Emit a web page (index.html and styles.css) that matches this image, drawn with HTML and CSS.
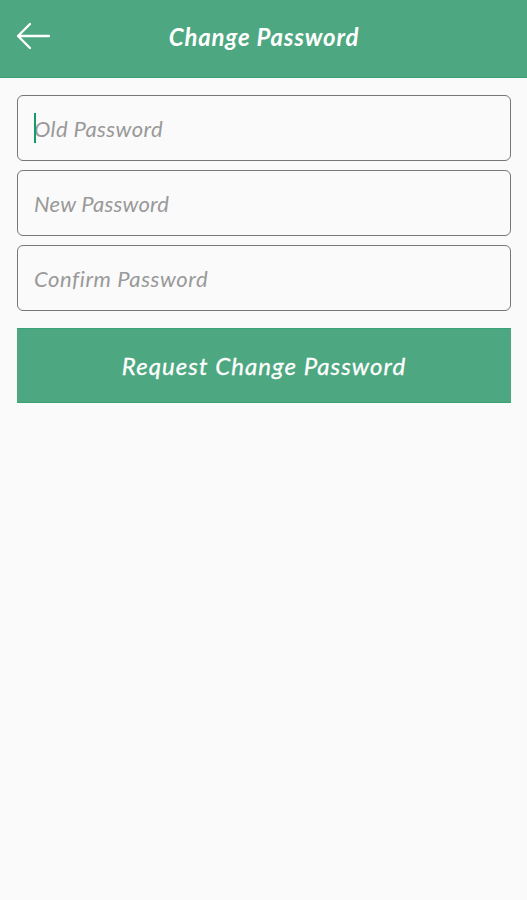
FILE: index.html
```html
<!DOCTYPE html>
<html lang="en">
  <head>
    <meta charset="UTF-8" />
    <meta name="viewport" content="width=device-width, initial-scale=1.0" />
    <title>Change Password</title>
    <link rel="stylesheet" href="styles.css">
  </head>
  <body>
    <header class="app-bar">
      <button class="back" type="button" aria-label="Back">
        <svg width="36" height="28" viewBox="0 0 36 28" fill="none" stroke="currentColor" stroke-width="2.3" stroke-linecap="round" stroke-linejoin="round">
          <path d="M33 14H2M14 2L2 14l12 12" />
        </svg>
      </button>
      <h1 class="title">Change Password</h1>
    </header>

    <form class="form">
      <div class="field">
        <input class="old" type="text" placeholder="Old Password" />
        <span class="caret"></span>
      </div>
      <div class="field">
        <input class="new" type="text" placeholder="New Password" />
      </div>
      <div class="field">
        <input class="confirm" type="text" placeholder="Confirm Password" />
      </div>
      <button class="submit" type="button">Request Change Password</button>
    </form>
  </body>
</html>
```
FILE: styles.css
```css
* {
  box-sizing: border-box;
}
body {
  margin: 0;
  min-height: 100vh;
  background-color: #fafafa;
  font-family: "Lato", "Open Sans", sans-serif;
  font-style: italic;
}
button,
input {
  font: inherit;
  border: none;
  padding: 0;
}
.app-bar {
  display: grid;
  grid-template-columns: 36px 1fr 36px;
  align-items: center;
  height: 78px;
  padding: 0 15px 5px 16px;
  background-color: #4da780;
  border-bottom: 1px solid #3ba076;
  color: white;
}
.back {
  display: flex;
  background: none;
  color: white;
}
.title {
  margin: 0;
  padding-top: 2px;
  font-size: 24px;
  font-weight: bold;
  line-height: 30px;
  letter-spacing: 0.8px;
  text-align: center;
  white-space: nowrap;
}
.form {
  display: flex;
  flex-direction: column;
  gap: 9px;
  padding: 17px 16px 0 17px;
}
.field {
  position: relative;
  height: 66px;
  padding: 0 16px;
  border: 1px solid #777;
  border-radius: 6px;
}
.field input {
  width: 100%;
  height: 64px;
  background: none;
  font-size: 22px;
  outline: none;
}
.field input::placeholder {
  color: #999;
  opacity: 1;
}
.field .old {
  letter-spacing: 0.4px;
}
.field .new {
  letter-spacing: 0.2px;
}
.field .confirm {
  letter-spacing: 0.6px;
}
.caret {
  position: absolute;
  left: 16px;
  top: 17px;
  width: 2px;
  height: 30px;
  background-color: #159b68;
}
.submit {
  height: 75px;
  margin-top: 8px;
  background-color: #4da780;
  border-top: 1px solid #3ba076;
  border-bottom: 1px solid #3ba076;
  color: white;
  font-size: 24px;
  letter-spacing: 1.05px;
  -webkit-text-stroke: 0.3px white;
}
```
